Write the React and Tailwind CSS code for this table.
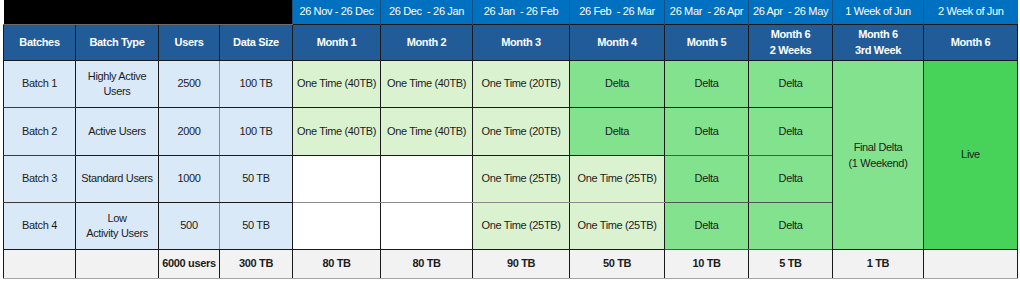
import React from 'react';

const font = { fontFamily: '"Liberation Sans", Arial, sans-serif' };

const widths = [72, 83, 61, 73, 88, 92, 97, 95, 84, 84, 91, 94];

const dates = [
    '26 Nov - 26 Dec',
    '26 Dec  - 26 Jan',
    '26 Jan  - 26 Feb',
    '26 Feb  - 26 Mar',
    '26 Mar  - 26 Apr',
    '26 Apr  - 26 May',
    '1 Week of Jun',
    '2 Week of Jun'
];

const heads = ['Batches', 'Batch Type', 'Users', 'Data Size', 'Month 1', 'Month 2', 'Month 3', 'Month 4', 'Month 5'];

const batches = [
    { name: 'Batch 1', type: ['Highly Active', 'Users'], users: '2500', size: '100 TB', plan: ['40', '40', '20', null] },
    { name: 'Batch 2', type: ['Active Users'], users: '2000', size: '100 TB', plan: ['40', '40', '20', null] },
    { name: 'Batch 3', type: ['Standard Users'], users: '1000', size: '50 TB', plan: ['', '', '25', '25'] },
    { name: 'Batch 4', type: ['Low', 'Activity Users'], users: '500', size: '50 TB', plan: ['', '', '25', '25'] }
];

const totals = ['', '', '6000 users', '300 TB', '80 TB', '80 TB', '90 TB', '50 TB', '10 TB', '5 TB', '1 TB', ''];

const rowHeights = ['h-[47px]', 'h-[48px]', 'h-[47px]', 'h-[47px]'];

const App = () => {
    return (
        <div className="w-[1020px] h-[282px] bg-white pl-[3px] overflow-hidden text-[11px] leading-[15px] tracking-[-0.35px] text-[#1c1c1c] whitespace-nowrap" style={font}>
            <table className="table-fixed border-collapse w-[1014px]">
                <colgroup>
                    {widths.map((w, i) => (
                        <col key={i} style={{ width: w }} />
                    ))}
                </colgroup>
                <tbody>
                    {/* date ranges */}
                    <tr className="h-[24px]">
                        <td colSpan={4} className="bg-black border-b border-[#6b6b6b]" />
                        {dates.map((d, i) => (
                            <td key={i} className="bg-[#0070c0] text-white text-center whitespace-pre border-l border-[#1b4f80] p-0 overflow-hidden">
                                {d}
                            </td>
                        ))}
                    </tr>

                    {/* column headings */}
                    <tr className="h-[36px] bg-[#215c98] text-white font-bold">
                        {heads.map((h, i) => (
                            <td key={i} className="border border-[#1a1a1a] text-center p-0">{h}</td>
                        ))}
                        <td className="border border-[#1a1a1a] text-center p-0 leading-[16px]">Month 6<br />2 Weeks</td>
                        <td className="border border-[#1a1a1a] text-center p-0 leading-[16px]">Month 6<br />3rd Week</td>
                        <td className="border border-[#1a1a1a] text-center p-0">Month 6</td>
                    </tr>

                    {batches.map((b, r) => (
                        <tr key={b.name} className={rowHeights[r]}>
                            <td className={`bg-[#dae9f8] border-l border-r border-[#1a1a1a] text-center p-0 ${r === 3 ? 'border-b' : 'border-b border-b-[#3a3a3a]'}`}>{b.name}</td>
                            <td className="bg-[#dae9f8] border border-[#1a1a1a] text-center p-0 leading-[15px]">
                                {b.type.map((t, i) => (
                                    <div key={i}>{t}</div>
                                ))}
                            </td>
                            <td className="bg-[#dae9f8] border border-[#1a1a1a] border-r-[#8c8c8c] text-center p-0">{b.users}</td>
                            <td className="bg-[#dae9f8] border border-[#1a1a1a] border-l-[#8c8c8c] text-center p-0">{b.size}</td>
                            {b.plan.map((p, i) =>
                                p === null ? (
                                    <td key={i} className="bg-[#83e28e] border border-[#1a1a1a] text-center p-0">Delta</td>
                                ) : p === '' ? (
                                    <td key={i} className={`bg-white border border-[#1a1a1a] ${r === 2 ? 'border-b-[#8c8c8c]' : ''}`} />
                                ) : (
                                    <td key={i} className={`bg-[#daf2d0] border border-[#1a1a1a] text-center p-0 ${r === 2 ? 'border-b-[#8c8c8c]' : ''}`}>
                                        One Time ({p}TB)
                                    </td>
                                )
                            )}
                            <td className={`bg-[#83e28e] border border-[#1a1a1a] text-center p-0 ${r >= 1 ? 'border-b-[#555]' : ''}`}>Delta</td>
                            <td className={`bg-[#83e28e] border border-[#1a1a1a] text-center p-0 ${r >= 1 ? 'border-b-[#555]' : ''}`}>Delta</td>
                            {r === 0 && (
                                <>
                                    <td rowSpan={4} className="bg-[#83e28e] border border-[#1a1a1a] text-center p-0 leading-[16px]">
                                        Final Delta<br />(1 Weekend)
                                    </td>
                                    <td rowSpan={4} className="bg-[#47d359] border border-[#1a1a1a] text-center p-0">Live</td>
                                </>
                            )}
                        </tr>
                    ))}

                    {/* totals */}
                    <tr className="h-[29px] bg-[#f2f2f2] font-bold">
                        {totals.map((t, i) => (
                            <td key={i} className="border-x border-[#1a1a1a] border-b border-b-[#a6a6a6] text-center p-0">{t}</td>
                        ))}
                    </tr>
                </tbody>
            </table>
        </div>
    );
};

export default App;
